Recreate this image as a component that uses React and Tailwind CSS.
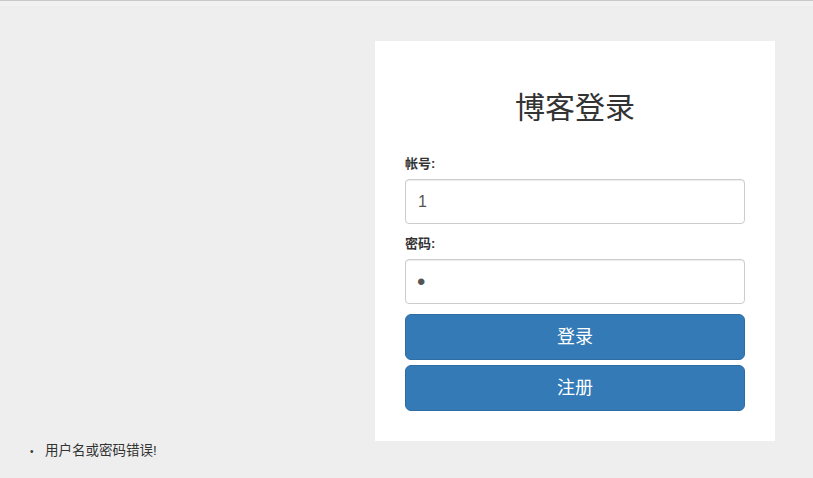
import React, { useState } from "react";

export default function App() {
  const [user, setUser] = useState("1");
  const [pwd, setPwd] = useState("1");

  const font = {
    fontFamily: '"Liberation Sans", "Noto Sans CJK SC", sans-serif',
  };

  return (
    <div
      className="min-h-[478px] bg-[#eeeeee] text-[#333333] border-t border-[#c8c8c8]"
      style={font}
    >
      <div className="h-[5px] bg-[#f1f1f1]" />

      {/* LOGIN CARD */}
      <div className="flex justify-end pr-[38px] pt-[35px]">
        <div className="w-[400px] bg-white px-[30px] pt-[30px] pb-[30px]">
          <h2 className="mt-[20px] mb-[30px] text-center text-[30px] leading-[33px] font-normal">
            博客登录
          </h2>

          <label className="block text-[13px] leading-[20px] font-bold mb-[5px]">
            帐号:
          </label>
          <input
            value={user}
            onChange={(e) => setUser(e.target.value)}
            className="block w-full h-[45px] px-[12px] text-[16px] text-[#555555] border border-[#cccccc] rounded-[4px] shadow-[inset_0_1px_1px_rgba(0,0,0,0.075)] outline-none"
          />

          <label className="block text-[13px] leading-[20px] font-bold mt-[10px] mb-[5px]">
            密码:
          </label>
          <input
            type="password"
            value={pwd}
            onChange={(e) => setPwd(e.target.value)}
            className="block w-full h-[45px] px-[11px] text-[24px] text-[#555555] border border-[#cccccc] rounded-[4px] shadow-[inset_0_1px_1px_rgba(0,0,0,0.075)] outline-none"
          />

          <button className="mt-[10px] block w-full h-[46px] bg-[#337ab7] border border-[#2e6da4] rounded-[6px] text-white text-[18px]">
            登录
          </button>
          <button className="mt-[5px] block w-full h-[46px] bg-[#337ab7] border border-[#2e6da4] rounded-[6px] text-white text-[18px]">
            注册
          </button>
        </div>
      </div>

      {/* ERROR LIST */}
      <ul className="pl-[30px]">
        <li className="flex items-center h-[20px] text-[13.5px]">
          <span className="w-[15px] text-[10px]">•</span>
          <span>用户名或密码错误!</span>
        </li>
      </ul>
    </div>
  );
}
